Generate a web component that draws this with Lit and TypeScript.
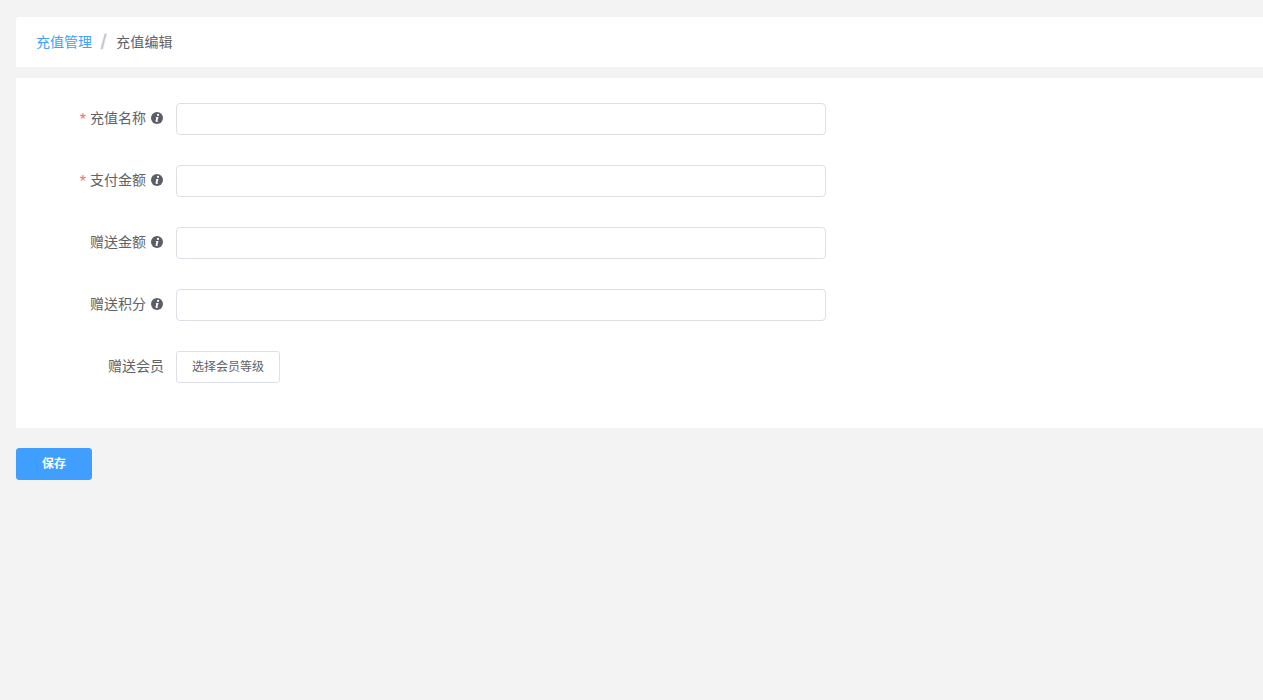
import { LitElement, html, css } from "lit";
import { customElement } from "lit/decorators.js";

const rows = [
  { label: "充值名称", req: true },
  { label: "支付金额", req: true },
  { label: "赠送金额", req: false },
  { label: "赠送积分", req: false },
];

@customElement("app-root")
export class AppRoot extends LitElement {
  static styles = css`
    :host {
      display: block;
      min-height: 700px;
      background: #f3f3f3;
      font-family: "Liberation Sans", "Noto Sans CJK SC", sans-serif;
      font-size: 14px;
      color: #606266;
      box-sizing: border-box;
      padding: 17px 0 0 16px;
      overflow: hidden;
    }
    .crumbs {
      height: 50px;
      background: #fff;
      border-radius: 4px 0 0 0;
      display: flex;
      align-items: center;
      padding-left: 20px;
      font-size: 14px;
      line-height: 14px;
      box-sizing: border-box;
    }
    .crumbs a { color: #409eff; }
    .crumbs .sep {
      color: #c0c4cc;
      margin: 0 9.5px 0 8.5px;
      font-size: 20px;
      font-weight: 400;
      width: 6px;
      text-align: center;
      -webkit-text-stroke: 0.4px #c0c4cc;
    }
    .crumbs .cur { color: #606266; letter-spacing: 0.2px; }
    .card {
      margin-top: 11px;
      height: 350px;
      background: #fff;
      box-sizing: border-box;
      padding-top: 25px;
      display: flex;
      flex-direction: column;
      gap: 30px;
    }
    .row { display: flex; align-items: center; height: 32px; }
    .label {
      width: 160px;
      padding-right: 12px;
      box-sizing: border-box;
      display: flex;
      justify-content: flex-end;
      align-items: center;
      line-height: 14px;
      margin-top: -2px;
    }
    .label span.txt { position: relative; top: -0.5px; }
    .star { color: #f56c6c; margin-right: 4px; font-size: 16px; position: relative; top: 2px; }
    .info { width: 12px; height: 12px; margin: 0 1px 0 5px; display: block; }
    input {
      width: 650px;
      height: 32px;
      box-sizing: border-box;
      border: 1px solid #dcdfe6;
      border-radius: 4px;
      background: #fff;
      outline: none;
      padding: 0 12px;
    }
    button {
      font-family: inherit;
      font-size: 12px;
      line-height: 12px;
      height: 32px;
      border-radius: 3px;
      box-sizing: border-box;
      cursor: pointer;
      padding: 0 0 1px;
    }
    .plain {
      width: 104px;
      background: #fff;
      border: 1px solid #dcdfe6;
      color: #606266;
      padding-bottom: 0;
    }
    .save {
      display: block;
      width: 76px;
      margin-top: 20px;
      background: #409eff;
      border: 1px solid #409eff;
      color: #fff;
      font-weight: 700;
    }
  `;

  private info() {
    return html`<svg class="info" viewBox="0 0 12 12" aria-hidden="true">
      <circle cx="6" cy="6" r="6" fill="#5b5e66"></circle>
      <circle cx="7" cy="2.9" r="1.1" fill="#fff"></circle>
      <path d="M4.9 5h2.6L6.5 8.6c-.1.4.1.5.7.3l-.2.6c-.6.3-1.1.4-1.6.4-.7 0-1-.4-.8-1.1L5.400 5.600l-.7-.1z" fill="#fff"></path>
    </svg>`;
  }

  render() {
    return html`
      <div class="crumbs">
        <a>充值管理</a><span class="sep">/</span><span class="cur">充值编辑</span>
      </div>
      <div class="card">
        ${rows.map(
          (r) => html`<div class="row">
            <div class="label">
              ${r.req ? html`<span class="star">*</span>` : ""}<span class="txt">${r.label}</span>${this.info()}
            </div>
            <input type="text" />
          </div>`
        )}
        <div class="row">
          <div class="label"><span>赠送会员</span></div>
          <button class="plain">选择会员等级</button>
        </div>
      </div>
      <button class="save">保存</button>
    `;
  }
}
